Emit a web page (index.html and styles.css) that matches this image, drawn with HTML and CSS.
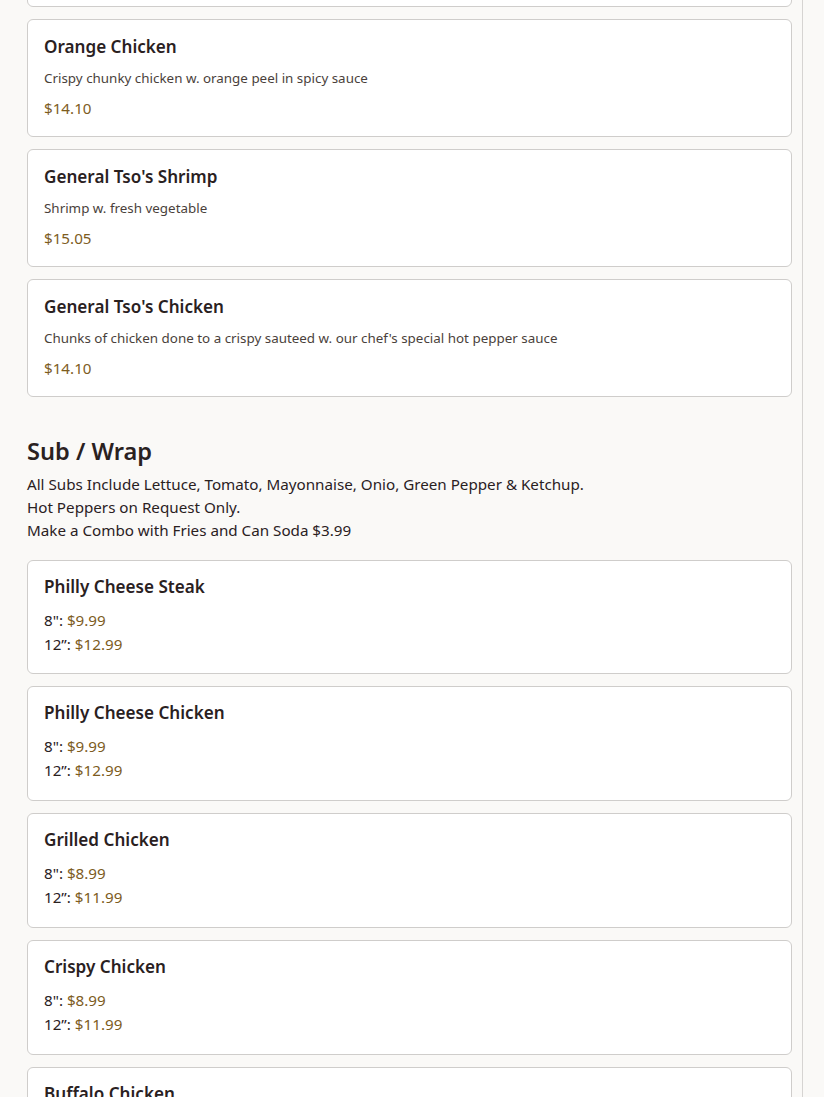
FILE: index.html
```html
<!DOCTYPE html>
<html lang="en">
  <head>
    <meta charset="UTF-8" />
    <meta name="viewport" content="width=device-width, initial-scale=1.0" />
    <title>Menu</title>
    <link rel="stylesheet" href="styles.css">
  </head>
  <body>
    <div class="menu">
      <div class="items first">
        <div class="card">
          <h3 class="name">Sesame Chicken</h3>
          <p class="desc">Chunks of chicken w. sesame seeds in sweet sauce</p>
          <div class="price">$14.10</div>
        </div>

        <div class="card">
          <h3 class="name">Orange Chicken</h3>
          <p class="desc">Crispy chunky chicken w. orange peel in spicy sauce</p>
          <div class="price">$14.10</div>
        </div>

        <div class="card">
          <h3 class="name">General Tso's Shrimp</h3>
          <p class="desc">Shrimp w. fresh vegetable</p>
          <div class="price">$15.05</div>
        </div>

        <div class="card">
          <h3 class="name">General Tso's Chicken</h3>
          <p class="desc">Chunks of chicken done to a crispy sauteed w. our chef's special hot pepper sauce</p>
          <div class="price">$14.10</div>
        </div>
      </div>

      <div class="section">
        <h2 class="section-title">Sub / Wrap</h2>
        <p class="section-note">
          All Subs Include Lettuce, Tomato, Mayonnaise, Onio, Green Pepper &amp; Ketchup.<br>
          Hot Peppers on Request Only.<br>
          Make a Combo with Fries and Can Soda $3.99
        </p>
      </div>

      <div class="items">
        <div class="card sized">
          <h3 class="name">Philly Cheese Steak</h3>
          <div class="sizes">
            <div>8": <span class="amount">$9.99</span></div>
            <div>12”: <span class="amount">$12.99</span></div>
          </div>
        </div>

        <div class="card sized">
          <h3 class="name">Philly Cheese Chicken</h3>
          <div class="sizes">
            <div>8": <span class="amount">$9.99</span></div>
            <div>12”: <span class="amount">$12.99</span></div>
          </div>
        </div>

        <div class="card sized">
          <h3 class="name">Grilled Chicken</h3>
          <div class="sizes">
            <div>8": <span class="amount">$8.99</span></div>
            <div>12”: <span class="amount">$11.99</span></div>
          </div>
        </div>

        <div class="card sized">
          <h3 class="name">Crispy Chicken</h3>
          <div class="sizes">
            <div>8": <span class="amount">$8.99</span></div>
            <div>12”: <span class="amount">$11.99</span></div>
          </div>
        </div>

        <div class="card sized">
          <h3 class="name">Buffalo Chicken</h3>
          <div class="sizes">
            <div>8": <span class="amount">$8.99</span></div>
            <div>12”: <span class="amount">$11.99</span></div>
          </div>
        </div>
      </div>
    </div>
  </body>
</html>
```

FILE: styles.css
```css
body {
  margin: 0;
  background-color: #faf9f7;
  font-family: "Noto Sans", Arial, sans-serif;
  color: #2a211f;
  overflow: hidden;
  height: 1097px;
}

.menu {
  width: 803px;
  box-sizing: border-box;
  min-height: 1097px;
  padding: 0 10px 0 27px;
  border-right: 1px solid #d6d4d2;
}

.items {
  display: flex;
  flex-direction: column;
  gap: 12px;
}

.items.first {
  margin-top: -111px;
}

.card {
  background-color: #ffffff;
  border: 1px solid #cfcdcb;
  border-radius: 6px;
  padding: 17px 16px 16px 16px;
}

.card.sized {
  padding: 16px 16px 17.8px 16px;
}

.name {
  margin: 0;
  font-size: 17.1px;
  line-height: 20px;
  font-weight: 600;
}

.desc {
  margin: 11px 0 0;
  font-size: 13.4px;
  line-height: 20px;
  color: #4a3f3b;
}

.price {
  margin-top: 8px;
  font-size: 15.2px;
  line-height: 24px;
  color: #7d5c1e;
}

.section {
  padding: 38px 0 17.5px;
}

.section-title {
  margin: 0 0 6px;
  font-size: 23.6px;
  line-height: 32px;
  font-weight: 600;
}

.section-note {
  margin: 0;
  font-size: 15.2px;
  line-height: 23px;
}

.sizes {
  margin-top: 11px;
  font-size: 15.2px;
  line-height: 24px;
}

.amount {
  color: #7d5c1e;
}
```
